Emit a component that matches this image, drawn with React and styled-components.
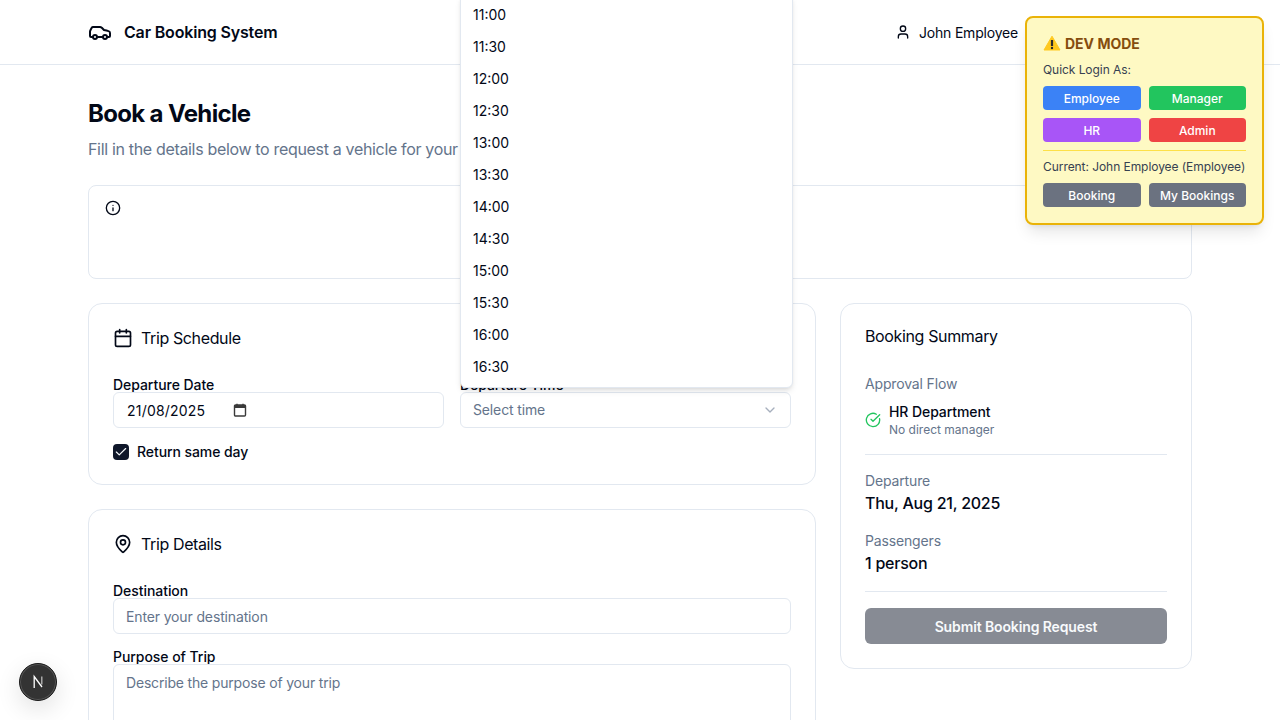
import React from "react";
import styled, { createGlobalStyle } from "styled-components";
import { Car, User, Info, Calendar, MapPin, CircleCheckBig, ChevronDown, Check } from "lucide-react";

const Global = createGlobalStyle`
  html, body { margin: 0; padding: 0; height: 720px; overflow: hidden; background: #fff; }
  body { font-family: Inter, "Liberation Sans", sans-serif; color: #020817; }
  * { box-sizing: border-box; }
`;

const Page = styled.div`
  position: relative;
  width: 1280px;
  height: 720px;
  overflow: hidden;
`;
const Header = styled.header`
  height: 65px;
  border-bottom: 1px solid #e2e8f0;
  padding: 0 88px;
  display: flex;
  align-items: center;
  justify-content: space-between;
`;
const Brand = styled.div`
  display: flex;
  align-items: center;
  gap: 12px;
  font-size: 16px;
  font-weight: 600;
  letter-spacing: -0.17px;
  color: #020817;
`;
const UserArea = styled.div`
  display: flex;
  align-items: center;
  gap: 8px;
  font-size: 14px;
  letter-spacing: -0.2px;
  padding-right: 174px;
`;
const Main = styled.main`
  padding: 32px 88px 0;
`;
const Title = styled.h1`
  margin: 0;
  font-size: 24px;
  line-height: 34px;
  font-weight: 700;
  letter-spacing: -0.66px;
  color: #020817;
`;
const Subtitle = styled.p`
  margin: 6px 0 24px;
  font-size: 16px;
  line-height: 24px;
  letter-spacing: -0.33px;
  color: #64748b;
`;
const Alert = styled.div`
  height: 94px;
  border: 1px solid #e2e8f0;
  border-radius: 8px;
  padding: 14px 16px;
  margin-bottom: 24px;
`;
const Columns = styled.div`
  display: grid;
  grid-template-columns: 728px 352px;
  gap: 24px;
  align-items: start;
`;
const Stack = styled.div`
  display: flex;
  flex-direction: column;
  gap: 24px;
`;
const Card = styled.section`
  border: 1px solid #e2e8f0;
  border-radius: 14px;
  padding: 24px;
  background: #fff;
`;
const CardTitle = styled.h2`
  margin: 0 0 30px;
  display: flex;
  align-items: center;
  gap: 8px;
  font-size: 16px;
  line-height: 20px;
  font-weight: 400;
  letter-spacing: -0.38px;
  color: #020817;
`;
const SummaryTitle = styled.h2`
  margin: 0 0 30px;
  font-size: 16px;
  line-height: 16px;
  font-weight: 400;
  letter-spacing: -0.36px;
  color: #020817;
`;
const TwoCols = styled.div`
  display: grid;
  grid-template-columns: 1fr 1fr;
  gap: 16px;
`;
const Field = styled.div`
  display: flex;
  flex-direction: column;
  margin-bottom: ${(p) => p.$mb || 0}px;
`;
const Label = styled.label`
  font-size: 14px;
  line-height: 14px;
  font-weight: 500;
  letter-spacing: -0.05px;
  color: #020817;
`;
const Control = styled.div`
  height: 36px;
  border: 1px solid #e2e8f0;
  border-radius: 6px;
  padding: 0 12px;
  display: flex;
  align-items: center;
  justify-content: ${(p) => p.$justify || "flex-start"};
  font-size: 14px;
  letter-spacing: -0.14px;
  color: ${(p) => (p.$muted ? "#64748b" : "#020817")};
  background: #fff;
`;
const DateText = styled.span`
  width: 106px;
  margin-left: 1px;
  letter-spacing: 0.2px;
`;
const TimeText = styled.span`
  padding-bottom: 1px;
`;
const TextArea = styled(Control)`
  height: 90px;
  align-items: flex-start;
  padding-top: 9px;
  line-height: 17px;
  letter-spacing: -0.18px;
`;
const CheckRow = styled.div`
  margin-top: 16px;
  display: flex;
  align-items: center;
  gap: 8px;
  font-size: 14px;
  line-height: 16px;
  font-weight: 500;
  letter-spacing: -0.08px;
  color: #020817;
`;
const CheckBox = styled.span`
  width: 16px;
  height: 16px;
  border-radius: 4px;
  background: #0f172a;
  color: #f8fafc;
  display: flex;
  align-items: center;
  justify-content: center;
`;
const SummaryLabel = styled.div`
  font-size: 14px;
  line-height: 20px;
  letter-spacing: -0.15px;
  color: #64748b;
`;
const ApprovalRow = styled.div`
  margin-top: 8px;
  display: flex;
  align-items: center;
  gap: 8px;
  color: #22c55e;
`;
const ApprovalName = styled.div`
  font-size: 14px;
  line-height: 20px;
  font-weight: 500;
  letter-spacing: -0.08px;
  color: #020817;
`;
const ApprovalNote = styled.div`
  font-size: 12px;
  line-height: 16px;
  color: #64748b;
`;
const Rule = styled.hr`
  margin: ${(p) => p.$top}px 0 ${(p) => p.$bottom}px;
  border: 0;
  border-top: 1px solid #e2e8f0;
`;
const SummaryValue = styled.div`
  margin: 0 0 16px;
  font-size: 16px;
  line-height: 24px;
  font-weight: 500;
  letter-spacing: -0.24px;
  color: #020817;
`;
const LastValue = styled(SummaryValue)`
  margin-bottom: 0;
`;
const SubmitButton = styled.button`
  width: 100%;
  height: 36px;
  border: 0;
  border-radius: 6px;
  background: #878b94;
  color: #f8fafc;
  font: 600 14px Inter, sans-serif;
  letter-spacing: -0.12px;
`;
const Dropdown = styled.div`
  position: absolute;
  left: 460px;
  top: -6px;
  width: 333px;
  height: 394px;
  padding: 4px;
  border: 1px solid #e2e8f0;
  border-radius: 6px;
  background: #fff;
  box-shadow: 0 4px 6px -1px rgba(0,0,0,.1), 0 2px 4px -2px rgba(0,0,0,.1);
`;
const Option = styled.div`
  height: 32px;
  padding: 0 0 1px 8px;
  display: flex;
  align-items: center;
  font-size: 14px;
  color: #020817;
`;
const DevPanel = styled.aside`
  position: absolute;
  top: 16px;
  right: 16px;
  width: 239px;
  padding: 16px;
  border: 2px solid #eab308;
  border-radius: 8px;
  background: #fef9c3;
  box-shadow: 0 10px 15px -3px rgba(0,0,0,.1), 0 4px 6px -4px rgba(0,0,0,.1);
`;
const DevTitle = styled.div`
  display: flex;
  align-items: center;
  gap: 4px;
  font-size: 14px;
  line-height: 20px;
  font-weight: 700;
  color: #854d0e;
  margin-bottom: 8px;
`;
const WarningIcon = styled.svg`
  margin-top: -2px;
`;
const DevText = styled.div`
  font-size: 12px;
  line-height: 16px;
  letter-spacing: -0.06px;
  white-space: nowrap;
  color: #374151;
  margin-bottom: 8px;
`;
const DevGrid = styled.div`
  display: grid;
  grid-template-columns: 1fr 1fr;
  gap: 8px;
`;
const DevButton = styled.button`
  height: 24px;
  border: 0;
  border-radius: 4px;
  padding: 0;
  background: ${(p) => p.$bg};
  color: #fff;
  font: 500 12px Inter, sans-serif;
`;
const DevDivider = styled.div`
  margin-top: 8px;
  padding-top: 8px;
  border-top: 1px solid #fde047;
`;
const Badge = styled.div`
  position: absolute;
  left: 19px;
  top: 663px;
  width: 38px;
  height: 38px;
  border-radius: 50%;
  background: #333;
  border: 1px solid #1a1a1a;
  box-shadow: inset 0 0 0 1px #555, 0 8px 24px rgba(0,0,0,.12);
  display: flex;
  align-items: center;
  justify-content: center;
`;

const times = ["11:00","11:30","12:00","12:30","13:00","13:30","14:00","14:30","15:00","15:30","16:00","16:30"];

export default function App() {
  return (
    <Page>
      <Global />
      <Header>
        <Brand><Car size={24} strokeWidth={2} />Car Booking System</Brand>
        <UserArea><User size={16} />John Employee</UserArea>
      </Header>
      <Main>
        <Title>Book a Vehicle</Title>
        <Subtitle>Fill in the details below to request a vehicle for your trip.</Subtitle>
        <Alert><Info size={16} /></Alert>
        <Columns>
          <Stack>
            <Card>
              <CardTitle><Calendar size={20} />Trip Schedule</CardTitle>
              <TwoCols>
                <Field>
                  <Label>Departure Date</Label>
                  <Control>
                    <DateText>21/08/2025</DateText>
                    <svg width="14" height="14" viewBox="0 0 14 14" fill="none">
                      <rect x="1.5" y="2" width="11" height="11" rx="1" stroke="#3a3a3a" strokeWidth="1.4" />
                      <rect x="1.5" y="2" width="11" height="3" fill="#3a3a3a" />
                      <path d="M4 .8v2M10 .8v2" stroke="#3a3a3a" strokeWidth="1.4" />
                    </svg>
                  </Control>
                </Field>
                <Field>
                  <Label>Departure Time</Label>
                  <Control $muted $justify="space-between">
                    <TimeText>Select time</TimeText>
                    <ChevronDown size={16} color="#a6afbd" />
                  </Control>
                </Field>
              </TwoCols>
              <CheckRow>
                <CheckBox><Check size={14} strokeWidth={2} /></CheckBox>
                Return same day
              </CheckRow>
            </Card>
            <Card>
              <CardTitle><MapPin size={20} />Trip Details</CardTitle>
              <Field $mb={16}>
                <Label>Destination</Label>
                <Control $muted>Enter your destination</Control>
              </Field>
              <Field>
                <Label>Purpose of Trip</Label>
                <TextArea $muted>Describe the purpose of your trip</TextArea>
              </Field>
            </Card>
          </Stack>
          <Card>
            <SummaryTitle>Booking Summary</SummaryTitle>
            <SummaryLabel>Approval Flow</SummaryLabel>
            <ApprovalRow>
              <CircleCheckBig size={16} />
              <div>
                <ApprovalName>HR Department</ApprovalName>
                <ApprovalNote>No direct manager</ApprovalNote>
              </div>
            </ApprovalRow>
            <Rule $top={16} $bottom={16} />
            <SummaryLabel>Departure</SummaryLabel>
            <SummaryValue>Thu, Aug 21, 2025</SummaryValue>
            <SummaryLabel>Passengers</SummaryLabel>
            <LastValue>1 person</LastValue>
            <Rule $top={16} $bottom={16} />
            <SubmitButton>Submit Booking Request</SubmitButton>
          </Card>
        </Columns>
      </Main>

      <Dropdown>
        {times.map((t) => <Option key={t}>{t}</Option>)}
      </Dropdown>

      <DevPanel>
        <DevTitle>
          <WarningIcon width="18" height="16" viewBox="0 0 18 16">
            <path d="M9 1.2 17 15H1Z" fill="#ffc91f" stroke="#ffc91f" strokeLinejoin="round" />
            <path d="M9 5v6" stroke="#2b2b2b" strokeWidth="2.2" />
            <circle cx="9" cy="13" r="1.2" fill="#2b2b2b" />
          </WarningIcon>
          DEV MODE
        </DevTitle>
        <DevText>Quick Login As:</DevText>
        <DevGrid>
          <DevButton $bg="#3b82f6">Employee</DevButton>
          <DevButton $bg="#22c55e">Manager</DevButton>
          <DevButton $bg="#a855f7">HR</DevButton>
          <DevButton $bg="#ef4444">Admin</DevButton>
        </DevGrid>
        <DevDivider>
          <DevText>Current: John Employee (Employee)</DevText>
          <DevGrid>
            <DevButton $bg="#6b7280">Booking</DevButton>
            <DevButton $bg="#6b7280">My Bookings</DevButton>
          </DevGrid>
        </DevDivider>
      </DevPanel>

      <Badge>
        <svg width="16" height="16" viewBox="0 0 16 16" fill="none">
          <path d="M4.2 14V2.5L12 13" stroke="#fff" strokeWidth="1.3" />
          <path d="M11.8 2.5v8" stroke="#bdbdbd" strokeWidth="1.3" />
        </svg>
      </Badge>
    </Page>
  );
}
